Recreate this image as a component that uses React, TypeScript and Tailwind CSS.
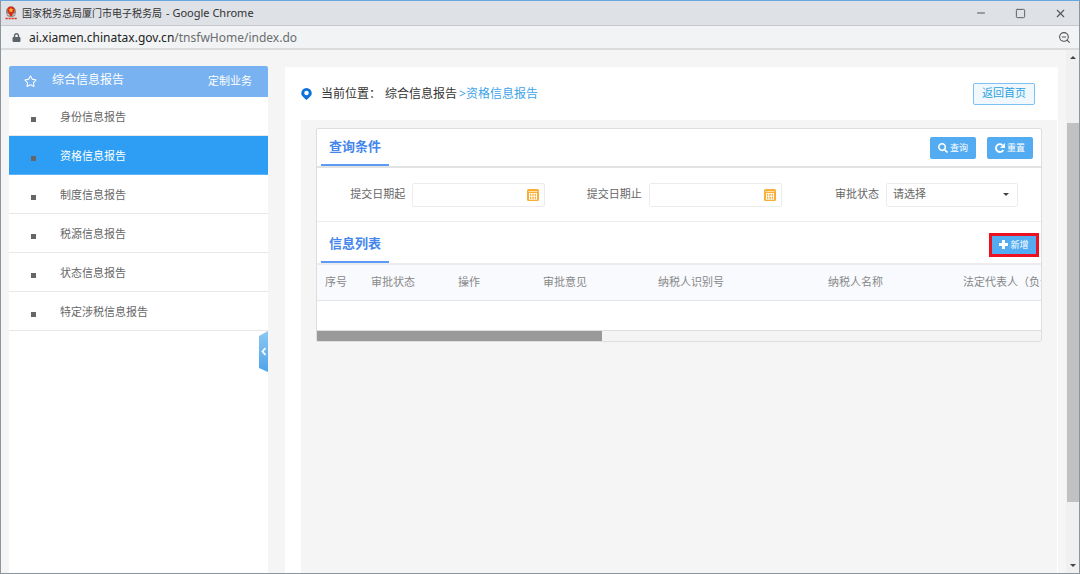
import type { ReactNode } from 'react';
import { Minus, Square, Star, X, ZoomOut } from 'lucide-react';
import { FaLock, FaSearch } from 'react-icons/fa';

const menuItems = [
  '身份信息报告',
  '资格信息报告',
  '制度信息报告',
  '税源信息报告',
  '状态信息报告',
  '特定涉税信息报告',
];

const columns = [
  { label: '序号', width: 'w-[46px]' },
  { label: '审批状态', width: 'w-[87px]' },
  { label: '操作', width: 'w-[85px]' },
  { label: '审批意见', width: 'w-[115px]' },
  { label: '纳税人识别号', width: 'w-[170px]' },
  { label: '纳税人名称', width: 'w-[135px]' },
  { label: '法定代表人（负责人）', width: 'w-[200px]' },
];

function TaxEmblem() {
  return (
    <svg viewBox="0 0 24 28" className="w-3 h-[14px] shrink-0">
      <path d="M2 12C2 5 6 1 12 1s10 4 10 11l-2 8c-5 3-11 3-16 0z" fill="#8d8782" />
      <circle cx="12" cy="8" r="7" fill="#e2231a" />
      <path d="M12 3l1.6 3.2 3.4.4-2.5 2.4.7 3.4-3.2-1.6-3.2 1.6.7-3.4L7 6.6l3.4-.4z" fill="#f9b51c" />
      <path d="M4 15c5 3 11 3 16 0l-1 3c-4 2-10 2-14 0z" fill="#d8d2cc" />
      <path d="M8 14h8l-2 6h-4z" fill="#e2231a" />
      <path d="M1 25h4.5M7 25h4.5M13 25h4.5M19 25h4.5" stroke="#e0331f" strokeWidth="3" />
    </svg>
  );
}

function PinIcon() {
  return (
    <svg viewBox="0 0 22 24" className="w-[11px] h-3 shrink-0">
      <path d="M11 0a10.500 10.500 0 0 1 10.500 10.500c0 5.500-6 9-10.500 13.500C6.500 19.500.500 16 .500 10.500A10.500 10.500 0 0 1 11 0z" fill="#0b72dc" />
      <circle cx="11" cy="10" r="4.500" fill="#fff" />
    </svg>
  );
}

function CalendarIcon() {
  return (
    <svg viewBox="0 0 24 24" className="w-3 h-3">
      <rect width="24" height="24" rx="3" fill="#fbae36" />
      <path d="M3 5h18" stroke="#fde0ae" strokeWidth="2" />
      <path d="M5 8v13M9.500 8v13M14.500 8v13M19 8v13" stroke="#fff" strokeWidth="2" />
      <path d="M4 9h16M4 14.500h16M4 20.500h16" stroke="#fff" strokeWidth="1.500" />
    </svg>
  );
}

function RepeatIcon() {
  return (
    <svg viewBox="0 0 12 12" className="w-[10px] h-[10px]">
      <path d="M10 8.400A4.700 4.700 0 1 1 9 2.600" fill="none" stroke="currentColor" strokeWidth="2.200" />
      <path d="M12 0v6H6z" fill="currentColor" />
    </svg>
  );
}

function PlusIcon() {
  return (
    <svg viewBox="0 0 9 9" className="w-[9px] h-[9px]">
      <path d="M4.500 0v9M0 4.500h9" stroke="currentColor" strokeWidth="3" />
    </svg>
  );
}

function SectionTitle({ title, children }: { title: string; children: ReactNode }) {
  return (
    <div className="h-[37px] flex items-stretch justify-between pl-1 pr-2">
      <h2 className="px-2 border-b-2 border-[#5b9bf3] text-[13px] font-bold text-[#4486ec] flex items-center">
        {title}
      </h2>
      <div className="flex items-center gap-[11px]">{children}</div>
    </div>
  );
}

function DateField({ id, label }: { id: string; label: string }) {
  return (
    <div className="flex items-center gap-[7px]">
      <label htmlFor={id}>{label}</label>
      <div className="relative">
        <input id={id} type="text" className="block w-[133px] h-6 px-2 border border-[#ececec] rounded-xs bg-white" />
        <span className="absolute right-[6px] top-[6px]">
          <CalendarIcon />
        </span>
      </div>
    </div>
  );
}

export default function App() {
  return (
    <div className="h-screen flex flex-col overflow-hidden border border-[#8c969e] border-t-[#67a7e0] bg-[#f5f5f5] text-[11px] text-[#666] font-['Noto_Sans','Noto_Sans_CJK_SC',sans-serif]">
      {/* Window title */}
      <header className="h-[25px] shrink-0 flex items-center pl-1 bg-[#dee1e6] border-b border-[#c5c9cc] text-[#333]">
        <TaxEmblem />
        <h1 className="ml-[5px] flex items-center gap-1">
          <span className="text-[10px]">国家税务总局厦门市电子税务局</span>
          <span>- Google Chrome</span>
        </h1>
        <div className="ml-auto flex items-center gap-7 pr-3 text-[#555]">
          <button aria-label="最小化"><Minus size={12} strokeWidth={2} /></button>
          <button aria-label="最大化"><Square size={11} strokeWidth={2} /></button>
          <button aria-label="关闭"><X size={13} strokeWidth={2} /></button>
        </div>
      </header>

      {/* Address bar */}
      <div className="h-6 shrink-0 flex items-center pl-[11px] pr-2 pt-px bg-[#f1f3f4] border-b-2 border-[#d9dbdc]">
        <FaLock size={9} className="text-[#5f6368]" />
        <p className="ml-2 text-[12px] text-[#6a6d70]">
          <span className="text-[#222]">ai.xiamen.chinatax.gov.cn</span>/tnsfwHome/index.do
        </p>
        <ZoomOut size={13} className="ml-auto text-[#555]" />
      </div>

      <div className="flex-1 min-h-0 flex">
        <div className="flex-1 min-w-0 flex px-2 pt-4 gap-[17px]">
          <aside className="relative w-[259px] shrink-0 bg-white rounded-t-xs">
            <div className="h-[31px] flex items-center pl-[15px] pr-4 bg-[#78b2f0] text-white rounded-t-xs">
              <Star size={13} strokeWidth={2} />
              <h2 className="ml-[15px] pb-1 text-[12px]">综合信息报告</h2>
              <a href="#" className="ml-auto">定制业务</a>
            </div>
            <ul>
              {menuItems.map((item) => {
                const active = item === '资格信息报告';
                return (
                  <li key={item}>
                    <a
                      href="#"
                      className={`h-[39px] flex items-center gap-6 pl-[22px] pt-[2px] border-b ${
                        active ? 'bg-[#2d9ef4] border-[#5fb4f5] text-white' : 'border-[#e8e8e8]'
                      }`}
                    >
                      <span className="size-[5px] mt-1 bg-[#666]" />
                      {item}
                    </a>
                  </li>
                );
              })}
            </ul>
            <button aria-label="收起菜单" className="absolute right-0 top-[265px]">
              <svg viewBox="0 0 9 41" className="w-[9px] h-[41px]">
                <defs>
                  <linearGradient id="handle" x1="0" y1="0" x2="0" y2="1">
                    <stop offset="0" stopColor="#8cc8f4" />
                    <stop offset="1" stopColor="#4ea3ea" />
                  </linearGradient>
                </defs>
                <path d="M9 0v41L0 37V5z" fill="url(#handle)" />
                <path d="M6.500 17L3.500 20.500 6.500 24" fill="none" stroke="#fff" strokeWidth="1.800" />
              </svg>
            </button>
          </aside>

          <main className="flex-1 min-w-0 flex flex-col mt-px bg-white rounded-t-xs">
            <div className="h-[53px] shrink-0 flex items-center justify-between pl-4 pr-[23px]">
              <nav className="flex items-center text-[12px] text-[#333]">
                <PinIcon />
                <span className="ml-[9px]">当前位置：</span>
                <span className="ml-1">综合信息报告</span>
                <a href="#" className="ml-[2px] text-[#3da3ea]">&gt;资格信息报告</a>
              </nav>
              <button className="h-[22px] px-2 border border-[#7cc2f5] rounded-xs bg-[#f0f8fe] text-[#2ca3e0]">返回首页</button>
            </div>

            <div className="flex-1 ml-4 mr-px bg-[#f5f5f5] px-[15px] pt-2">
              <section className="bg-white border border-[#dedede] rounded-xs overflow-hidden">
                <div className="border-b-2 border-[#e2e2e2]">
                  <SectionTitle title="查询条件">
                    <button className="h-[22px] w-[46px] flex items-center justify-center gap-[2px] rounded-xs bg-[#53acf2] text-white text-[9px]">
                      <FaSearch size={10} />查询
                    </button>
                    <button className="h-[22px] w-[46px] flex items-center justify-center gap-[2px] rounded-xs bg-[#53acf2] text-white text-[9px]">
                      <RepeatIcon />重置
                    </button>
                  </SectionTitle>
                </div>

                <form className="h-[54px] grid grid-cols-3 gap-2 items-center justify-items-end pr-[23px] border-b border-[#ececec]">
                  <DateField id="date-from" label="提交日期起" />
                  <DateField id="date-to" label="提交日期止" />
                  <div className="flex items-center gap-[7px]">
                    <label htmlFor="status">审批状态</label>
                    <div className="relative">
                      <select id="status" className="block appearance-none w-[132px] h-6 px-[6px] border border-[#ececec] rounded-xs bg-white">
                        <option>请选择</option>
                      </select>
                      <span className="absolute right-[9px] top-[10px] border-x-[3px] border-x-transparent border-t-[3px] border-t-[#444]" />
                    </div>
                  </div>
                </form>

                <div className="pt-1 border-b-2 border-[#ececee]">
                  <SectionTitle title="信息列表">
                    <button className="-mr-[6px] h-6 w-[50px] flex items-center justify-center gap-[2px] border-3 border-[#ec1020] bg-[#53acf2] text-white text-[9px]">
                      <PlusIcon />新增
                    </button>
                  </SectionTitle>
                </div>

                <div className="overflow-hidden">
                  <table className="table-fixed w-[838px] text-left text-[#888]">
                    <thead>
                      <tr className="h-[35px] bg-[#f8fafe] border-b border-[#e2e5ea]">
                        {columns.map((col) => (
                          <th key={col.label} className={`${col.width} px-2 font-normal whitespace-nowrap`}>
                            {col.label}
                          </th>
                        ))}
                      </tr>
                    </thead>
                    <tbody>
                      <tr className="h-[30px]">
                        <td colSpan={columns.length} />
                      </tr>
                    </tbody>
                  </table>
                </div>
                <div className="h-[11px] border-t border-[#dedede] bg-[#f4f4f4]">
                  <div className="h-full w-[285px] bg-[#999]" />
                </div>
              </section>
            </div>
          </main>
        </div>

        {/* Page scrollbar */}
        <div className="w-[13px] shrink-0 flex flex-col items-center py-[6px] bg-[#f0f0f0]">
          <span className="border-x-[3px] border-x-transparent border-b-[3px] border-b-[#444]" />
          <div className="mt-16 w-3 h-[379px] bg-[#c1c1c1]" />
          <span className="mt-auto border-x-[3px] border-x-transparent border-t-[3px] border-t-[#444]" />
        </div>
      </div>
    </div>
  );
}
